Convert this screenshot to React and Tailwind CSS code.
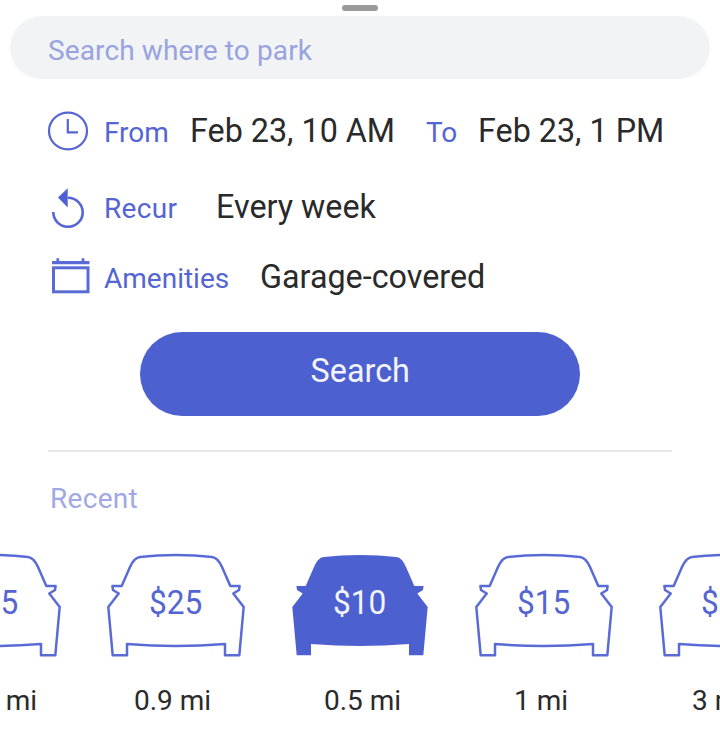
const CAR_PATH =
  "M15.700 34 L24 15 C27 8.500 29.500 5.500 34 5 Q51 3 70 3 Q89 3 106 5 C110.500 5.500 113 8.500 116 15 L124.300 34 H133.600 L133 38 L127.300 41.500 L137.700 55 L133.300 103.300 H119 V92 Q94 94 70 94 Q46 94 21 92 V103.300 H6.700 L2.300 55 L12.700 41.500 L7 38 L6.400 34 Z";

const RECENT = [
  { price: "$15", distance: "0.2 mi", indent: "pl-[38px]" },
  { price: "$25", distance: "0.9 mi", indent: "pl-[28px]" },
  { price: "$10", distance: "0.5 mi", indent: "pl-[34px]", active: true },
  { price: "$15", distance: "1 mi", indent: "pl-[40px]" },
  { price: "$5", distance: "3 mi", indent: "pl-[34px]", priceIndent: "pl-[43px]" },
];

function ClockIcon() {
  return (
    <svg className="overflow-visible" width="40" height="40" viewBox="0 0 40 40" fill="none" stroke="#5566d3" strokeWidth="2.200">
      <ellipse cx="20" cy="20" rx="19" ry="18.400" />
      <path d="M19.800 8 V21.300 H30" />
    </svg>
  );
}

function RecurIcon() {
  return (
    <svg width="40" height="40" viewBox="0 0 40 40" fill="none" stroke="#5566d3" strokeWidth="2.600">
      <path d="M5.300 24 A14.700 14.500 0 1 0 20 9.800" />
      <path d="M10 9.500 L19.700 0.200 V19.500 Z" fill="#4d60d0" stroke="none" />
    </svg>
  );
}

function CalendarIcon() {
  return (
    <svg className="overflow-visible" width="40" height="40" viewBox="0 0 40 40" fill="none" stroke="#5a6bd5">
      <rect x="5.500" y="11.800" width="34.500" height="24" strokeWidth="3" />
      <path d="M4 6.700 H41.500" strokeWidth="3.200" />
      <path d="M9.800 2.200 V6 M35 2.200 V6" strokeWidth="2.800" />
    </svg>
  );
}

function Field({ icon, label, labelWidth, children }) {
  return (
    <div className="flex h-10 items-baseline whitespace-nowrap pl-12">
      <span className="h-10 w-14 shrink-0 self-start">{icon}</span>
      <span className={`shrink-0 text-[28px] leading-10 text-[#5465d3] ${labelWidth}`}>{label}</span>
      {children}
    </div>
  );
}

function Value({ children, className = "" }) {
  return (
    <span className={`shrink-0 origin-left scale-x-95 text-[34px] leading-10 text-[#2a2a2a] ${className}`}>
      {children}
    </span>
  );
}

function Car({ item }) {
  return (
    <div className="w-[140px] shrink-0">
      <div className="relative h-[108px]">
        <svg
          width="140"
          height="108"
          viewBox="0 0 140 108"
          fill={item.active ? "#4d60d0" : "none"}
          stroke={item.active ? "none" : "#5a6bd6"}
          strokeWidth="2.500"
          strokeLinejoin="round"
        >
          <path d={CAR_PATH} />
        </svg>
        <div
          className={`absolute inset-x-0 top-[30px] text-[34px] leading-10 ${item.priceIndent ? item.priceIndent : "text-center"} ${item.active ? "text-[#f3f4fd]" : "text-[#5465d3]"}`}
        >
          <span className={`inline-block scale-x-[0.93] ${item.priceIndent ? "origin-left" : ""}`}>
            {item.price}
          </span>
        </div>
      </div>
      <div className={`mt-[25px] whitespace-nowrap text-[28px] leading-8 text-[#2a2a2a] ${item.indent}`}>
        {item.distance}
      </div>
    </div>
  );
}

export default function App() {
  return (
    <main className="flex h-[752px] w-[720px] flex-col overflow-hidden bg-white font-['Roboto',sans-serif]">
      <div className="mx-auto mt-[5px] h-1.5 w-9 shrink-0 rounded-full bg-[#999999]" />
      <div className="mx-2.5 mt-[5px] h-[63px] shrink-0 rounded-full bg-[#f1f3f5] pl-[38px] pt-[19px] text-[28px] leading-8 tracking-[0.12px] text-[#99a3e0]">
        Search where to park
      </div>

      <div className="mt-[31px] flex shrink-0 flex-col">
        <Field icon={<div className="pt-px"><ClockIcon /></div>} label="From" labelWidth="w-[86px]">
          <Value className="w-[236px]">Feb 23, 10 AM</Value>
          <span className="w-[52px] shrink-0 text-[28px] leading-10 text-[#5465d3]">To</span>
          <Value>Feb 23, 1 PM</Value>
        </Field>
        <div className="mt-9">
          <Field icon={<div className="pt-0.5"><RecurIcon /></div>} label="Recur" labelWidth="w-28 tracking-[0.3px]">
            <Value>Every week</Value>
          </Field>
        </div>
        <div className="mt-[30px]">
          <Field icon={<CalendarIcon />} label="Amenities" labelWidth="w-[156px]">
            <Value>Garage-covered</Value>
          </Field>
        </div>
      </div>

      <button className="mx-auto mt-9 h-[84px] w-[440px] shrink-0 rounded-full bg-[#4d60d0] pb-2 text-[34px] leading-10 text-[#f3f4fd]">
        <span className="inline-block scale-x-95">Search</span>
      </button>

      <div className="mx-12 mt-[34px] h-0.5 shrink-0 bg-[#e8e8e8]" />
      <h2 className="ml-[50px] mt-[31px] shrink-0 text-[28px] leading-8 tracking-[0.3px] text-[#a0a9e3]">Recent</h2>

      <div className="-ml-[78px] mt-[37px] flex shrink-0 gap-11">
        {RECENT.map((item, i) => (
          <Car key={i} item={item} />
        ))}
      </div>
    </main>
  );
}
